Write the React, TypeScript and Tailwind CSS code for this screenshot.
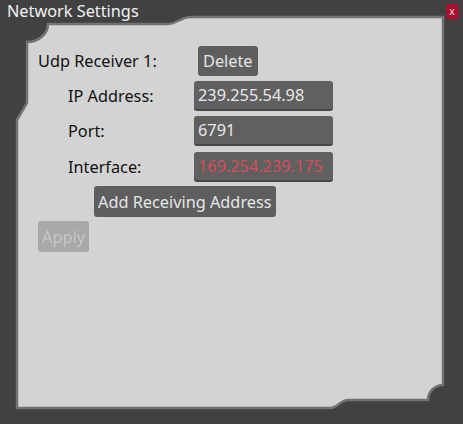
import React from 'react';

// Fondo decorativo del panel (forma con muescas del marco)
const PanelFrame: React.FC = () => (
  <svg className="absolute inset-0 pointer-events-none" width="463" height="424" viewBox="0 0 463 424">
    <path
      d="M 48 24 L 167 24 C 178 24 180 17 191 17 L 443 17 L 443 385 A 15 15 0 0 0 428 400 L 348 400 C 340 400 338 408 330 408 L 17 408 L 17 120 L 27 103 L 27 42 A 21 18 0 0 0 48 24 Z"
      fill="#d3d3d3"
      stroke="#737373"
      strokeWidth={2.5}
    />
  </svg>
);

interface FieldRowProps {
  label: string;
  value: string;
  valueClass?: string;
  className?: string;
}

const FieldRow: React.FC<FieldRowProps> = ({ label, value, valueClass = 'text-[#e8e8e8]', className = '' }) => (
  <div className={`flex items-center pl-[30px] ${className}`}>
    <span className="w-[126px] text-[#111111]">{label}</span>
    <div className="w-[139px] h-[30px] bg-[#606060] rounded-[3px] border-b-2 border-[#464646] flex items-center px-[4px]">
      <span className={valueClass}>{value}</span>
    </div>
  </div>
);

export default function App() {
  return (
    <div className="relative w-[463px] h-[424px] bg-[#414141] overflow-hidden font-['Noto_Sans',sans-serif] text-[16.3px] leading-[22px]">
      <PanelFrame />

      <div className="relative flex items-start justify-between h-[22px]">
        <span className="pl-[7px] text-[#f2f2f2]">Network Settings</span>
        <button className="mt-[4px] mr-[5px] w-[12px] h-[15px] bg-[#a8102e] flex items-center justify-center text-[#f0d0d8] text-[10px] leading-none font-['DejaVu_Sans',sans-serif]">
          x
        </button>
      </div>

      <div className="relative flex flex-col items-start pl-[38px] pt-[24px]">
        <div className="flex items-center">
          <span className="w-[160px] text-[#111111]">Udp Receiver 1:</span>
          <button className="h-[30px] px-[5px] bg-[#5e5e5e] rounded-[3px] text-[#e6e6e6]">Delete</button>
        </div>

        <FieldRow className="mt-[5px]" label="IP Address:" value="239.255.54.98" />
        <FieldRow className="mt-[5px]" label="Port:" value="6791" />
        <FieldRow
          className="mt-[6px]"
          label="Interface:"
          value="169.254.239.175"
          valueClass="text-[#d44d58]"
        />

        <button className="mt-[4px] ml-[56px] h-[31px] px-[4px] bg-[#5e5e5e] rounded-[3px] text-[#e6e6e6]">
          Add Receiving Address
        </button>

        <button className="mt-[4px] h-[31px] px-[4px] bg-[#a9a9a9] rounded-[3px] text-[#c6c6c6]">
          Apply
        </button>
      </div>
    </div>
  );
}
